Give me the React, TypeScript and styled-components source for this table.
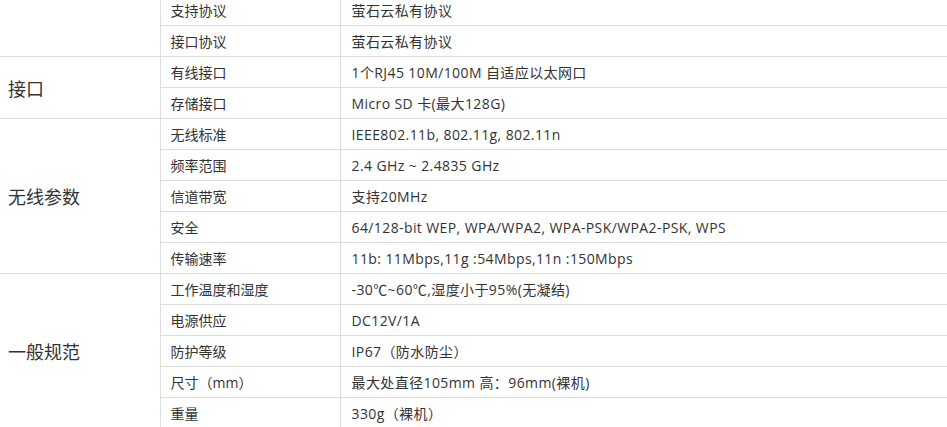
import styled, { createGlobalStyle } from 'styled-components';

const GlobalStyle = createGlobalStyle`
  html, body {
    margin: 0;
    padding: 0;
    background: #fff;
    overflow: hidden;
  }
`

const Wrapper = styled.div`
  width: 947px;
  height: 427px;
  overflow: hidden;
`

const SpecTable = styled.table`
  width: 947px;
  margin-top: -6px;
  border-collapse: collapse;
  table-layout: fixed;
  font-family: "Open Sans", "Noto Sans CJK SC", sans-serif;
  color: #333;
`

const Row = styled.tr`
  height: 31px;
`

const GroupCell = styled.td`
  padding: 0 0 0 8px;
  font-size: 18px;
  color: #333;
  vertical-align: middle;
  border-top: 1px solid #ddd;
  border-bottom: 1px solid #ddd;
  border-right: 1px solid #ddd;
`

const NameCell = styled.td`
  padding: 0 0 0 10px;
  font-size: 14px;
  border: 1px solid #ddd;
  white-space: nowrap;
`

const ValueCell = styled.td`
  padding: 0 0 0 11px;
  font-size: 14px;
  letter-spacing: 0.4px;
  border-top: 1px solid #ddd;
  border-bottom: 1px solid #ddd;
  border-left: 1px solid #ddd;
  white-space: nowrap;
`

type Spec = { name: string; value: string }
type Group = { title: string; specs: Spec[] }

const groups: Group[] = [
  {
    title: '',
    specs: [
      { name: '支持协议', value: '萤石云私有协议' },
      { name: '接口协议', value: '萤石云私有协议' },
    ],
  },
  {
    title: '接口',
    specs: [
      { name: '有线接口', value: '1个RJ45 10M/100M 自适应以太网口' },
      { name: '存储接口', value: 'Micro SD 卡(最大128G)' },
    ],
  },
  {
    title: '无线参数',
    specs: [
      { name: '无线标准', value: 'IEEE802.11b, 802.11g, 802.11n' },
      { name: '频率范围', value: '2.4 GHz ~ 2.4835 GHz' },
      { name: '信道带宽', value: '支持20MHz' },
      { name: '安全', value: '64/128-bit WEP, WPA/WPA2, WPA-PSK/WPA2-PSK, WPS' },
      { name: '传输速率', value: '11b: 11Mbps,11g :54Mbps,11n :150Mbps' },
    ],
  },
  {
    title: '一般规范',
    specs: [
      { name: '工作温度和湿度', value: '-30℃~60℃,湿度小于95%(无凝结)' },
      { name: '电源供应', value: 'DC12V/1A' },
      { name: '防护等级', value: 'IP67（防水防尘）' },
      { name: '尺寸（mm）', value: '最大处直径105mm 高：96mm(裸机)' },
      { name: '重量', value: '330g（裸机）' },
    ],
  },
]

const App = () => {
  return (
    <Wrapper>
      <GlobalStyle />
      <SpecTable>
        <colgroup>
          <col style={{ width: 160 }} />
          <col style={{ width: 180 }} />
          <col />
        </colgroup>
        <tbody>
          {groups.map((g) =>
            g.specs.map((s, i) => (
              <Row key={g.title + s.name}>
                {i === 0 && <GroupCell rowSpan={g.specs.length}>{g.title}</GroupCell>}
                <NameCell>{s.name}</NameCell>
                <ValueCell>{s.value}</ValueCell>
              </Row>
            ))
          )}
        </tbody>
      </SpecTable>
    </Wrapper>
  )
}

export default App
